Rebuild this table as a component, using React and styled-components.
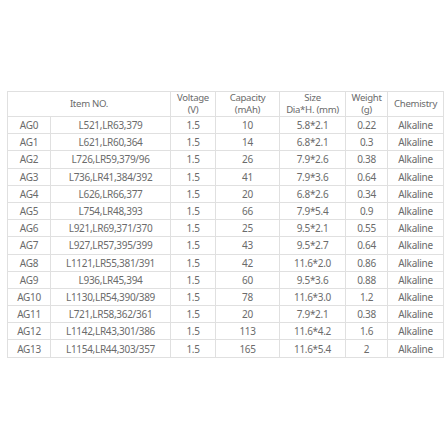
import React from "react";
import styled, { createGlobalStyle } from "styled-components";

const Global = createGlobalStyle`
  html, body { margin: 0; padding: 0; background: #fff; }
  body { width: 448px; height: 448px; overflow: hidden; }
`;

const Page = styled.div`
  padding: 91px 5px 0 7px;
  font-family: "Noto Sans", "Open Sans", sans-serif;
  color: #6b6b6b;
`;

const Table = styled.table`
  border-collapse: collapse;
  width: 436px;
  table-layout: fixed;
  font-size: 10px;
  letter-spacing: -0.3px;
`;

const HeadCell = styled.th`
  font-weight: 400;
  font-size: 9.6px;
  border: 1px solid #e0e0e0;
  height: 23px;
  padding: 0;
  text-align: center;
  vertical-align: middle;
  line-height: 12px;
  white-space: nowrap;
`;

const Line = styled.span`
  display: block;
  height: 12px;
`;

const Cell = styled.td`
  border: 1px solid #e0e0e0;
  height: 16.2px;
  padding: 0;
  text-align: center;
  vertical-align: middle;
  line-height: 12px;
  white-space: nowrap;
`;

const widths = [43, 120, 45, 64, 66, 42, 56];

const rows = [
  ["AG0", "L521,LR63,379", "1.5", "10", "5.8*2.1", "0.22"],
  ["AG1", "L621,LR60,364", "1.5", "14", "6.8*2.1", "0.3"],
  ["AG2", "L726,LR59,379/96", "1.5", "26", "7.9*2.6", "0.38"],
  ["AG3", "L736,LR41,384/392", "1.5", "41", "7.9*3.6", "0.64"],
  ["AG4", "L626,LR66,377", "1.5", "20", "6.8*2.6", "0.34"],
  ["AG5", "L754,LR48,393", "1.5", "66", "7.9*5.4", "0.9"],
  ["AG6", "L921,LR69,371/370", "1.5", "25", "9.5*2.1", "0.55"],
  ["AG7", "L927,LR57,395/399", "1.5", "43", "9.5*2.7", "0.64"],
  ["AG8", "L1121,LR55,381/391", "1.5", "42", "11.6*2.0", "0.86"],
  ["AG9", "L936,LR45,394", "1.5", "60", "9.5*3.6", "0.88"],
  ["AG10", "L1130,LR54,390/389", "1.5", "78", "11.6*3.0", "1.2"],
  ["AG11", "L721,LR58,362/361", "1.5", "20", "7.9*2.1", "0.38"],
  ["AG12", "L1142,LR43,301/386", "1.5", "113", "11.6*4.2", "1.6"],
  ["AG13", "L1154,LR44,303/357", "1.5", "165", "11.6*5.4", "2"],
];

const heads = [
  ["Voltage", "(V)"],
  ["Capacity", "(mAh)"],
  ["Size", "Dia*H. (mm)"],
  ["Weight", "(g)"],
];

export default function App() {
  return (
    <>
      <Global />
      <Page>
        <Table>
          <colgroup>
            {widths.map((w, i) => (
              <col key={i} style={{ width: w }} />
            ))}
          </colgroup>
          <thead>
            <tr>
              <HeadCell colSpan={2}>Item NO.</HeadCell>
              {heads.map(([a, b]) => (
                <HeadCell key={a}>
                  <Line>{a}</Line>
                  <Line>{b}</Line>
                </HeadCell>
              ))}
              <HeadCell>Chemistry</HeadCell>
            </tr>
          </thead>
          <tbody>
            {rows.map((r) => (
              <tr key={r[0]}>
                {r.map((c, i) => (
                  <Cell key={i}>{c}</Cell>
                ))}
                <Cell>Alkaline</Cell>
              </tr>
            ))}
          </tbody>
        </Table>
      </Page>
    </>
  );
}
